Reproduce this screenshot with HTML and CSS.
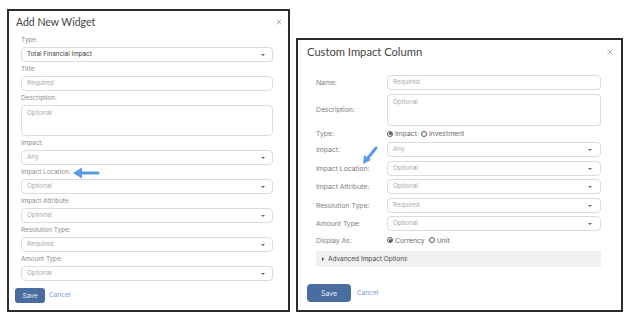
FILE: index.html
```html
<!DOCTYPE html>
<html>
<head>
<meta charset="utf-8">
<link rel="stylesheet" href="styles.css">
</head>
<body>
<div class="stage">
  <div class="panel panel-left">
    <div class="head">
      <span class="title">Add New Widget</span>
      <svg class="close" width="6" height="6" viewBox="0 0 6 6"><path d="M0.5 0.5L5.5 5.5M5.5 0.5L0.5 5.5" stroke="#9a9a9a" stroke-width="0.8"/></svg>
    </div>
    <div class="form">
      <div class="field"><div class="lbl">Type:</div><div class="ctl sel dark">Total Financial Impact<span class="caret"></span></div></div>
      <div class="field"><div class="lbl">Title:</div><div class="ctl">Required</div></div>
      <div class="field"><div class="lbl">Description:</div><div class="ctl area">Optional</div></div>
      <div class="field"><div class="lbl">Impact:</div><div class="ctl sel">Any<span class="caret"></span></div></div>
      <div class="field"><div class="lbl">Impact Location:</div><div class="ctl sel">Optional<span class="caret"></span></div></div>
      <div class="field"><div class="lbl">Impact Attribute:</div><div class="ctl sel">Optional<span class="caret"></span></div></div>
      <div class="field"><div class="lbl">Resolution Type:</div><div class="ctl sel">Required<span class="caret"></span></div></div>
      <div class="field"><div class="lbl">Amount Type:</div><div class="ctl sel">Optional<span class="caret"></span></div></div>
    </div>
    <div class="foot">
      <span class="btn btn-sm">Save</span>
      <span class="cancel">Cancel</span>
    </div>
  </div>

  <div class="panel panel-right">
    <div class="head head-r">
      <span class="title title-r">Custom Impact Column</span>
      <svg class="close" width="6" height="6" viewBox="0 0 6 6"><path d="M0.5 0.5L5.5 5.5M5.5 0.5L0.5 5.5" stroke="#9a9a9a" stroke-width="0.8"/></svg>
    </div>
    <div class="rows">
      <div class="row"><div class="rl">Name:</div><div class="ctl">Required</div></div>
      <div class="row"><div class="rl">Description:</div><div class="ctl area-r">Optional</div></div>
      <div class="row row-radio r-type"><div class="rl">Type:</div><div class="radios"><span class="radio on"></span><span class="rt">Impact</span><span class="radio"></span><span class="rt">Investment</span></div></div>
      <div class="row"><div class="rl">Impact:</div><div class="ctl sel">Any<span class="caret"></span></div></div>
      <div class="row"><div class="rl">Impact Location:</div><div class="ctl sel">Optional<span class="caret"></span></div></div>
      <div class="row"><div class="rl">Impact Attribute:</div><div class="ctl sel">Optional<span class="caret"></span></div></div>
      <div class="row"><div class="rl">Resolution Type:</div><div class="ctl sel">Required<span class="caret"></span></div></div>
      <div class="row"><div class="rl">Amount Type:</div><div class="ctl sel">Optional<span class="caret"></span></div></div>
      <div class="row row-radio r-disp"><div class="rl">Display As:</div><div class="radios"><span class="radio on"></span><span class="rt">Currency</span><span class="radio"></span><span class="rt">Unit</span></div></div>
      <div class="adv"><span class="tri"></span>Advanced Impact Options</div>
    </div>
    <div class="foot foot-r">
      <span class="btn btn-lg">Save</span>
      <span class="cancel">Cancel</span>
    </div>
  </div>

  <svg class="arrow arrow-left" width="28" height="14" viewBox="0 0 28 14">
    <line x1="8" y1="7" x2="26" y2="7" stroke="#5a9ae6" stroke-width="3" stroke-linecap="round"/>
    <polygon points="1,7 10,1.5 10,12.5" fill="#5a9ae6"/>
  </svg>
  <svg class="arrow arrow-right" width="18" height="20" viewBox="0 0 18 20">
    <line x1="15" y1="2" x2="6" y2="13" stroke="#5a9ae6" stroke-width="3" stroke-linecap="round"/>
    <polygon points="2,18 3,9 10,14" fill="#5a9ae6"/>
  </svg>
</div>
</body>
</html>
```
FILE: styles.css
```css
html, body {
  margin: 0;
  padding: 0;
  background: #fff;
}
body {
  width: 633px;
  height: 318px;
  overflow: hidden;
  font-family: Inter, "Liberation Sans", sans-serif;
}
.stage {
  position: relative;
  display: flex;
  align-items: flex-start;
  gap: 6px;
  padding: 9px 0 0 7px;
}
.panel {
  box-sizing: border-box;
  border: 2px solid #2c2c2c;
  background: #fff;
  display: flex;
  flex-direction: column;
}
.panel-left {
  width: 283px;
  height: 303px;
}
.panel-right {
  width: 327px;
  height: 274px;
  margin-top: 29px;
}
.head {
  display: flex;
  justify-content: space-between;
  align-items: center;
  height: 24px;
  box-sizing: border-box;
  padding: 2px 6px 4px 7px;
}
.title {
  font-family: Lato, "Liberation Sans", sans-serif;
  font-size: 10.5px;
  line-height: 16px;
  color: #454545;
}
.title-r {
  font-size: 11.2px;
}
.close {
  display: block;
  flex: none;
}
.form {
  flex: 1;
  overflow: hidden;
  padding: 0 15px 0 12px;
}
.field {
  margin-bottom: 2px;
}
.lbl {
  font-size: 6.3px;
  line-height: 10px;
  color: #8c8c8c;
  margin-bottom: 2px;
}
.ctl {
  position: relative;
  box-sizing: border-box;
  height: 15px;
  border: 1px solid #dcdcdc;
  border-radius: 4px;
  padding: 0 5px;
  font-size: 6.3px;
  line-height: 13px;
  color: #a8a8a8;
  background: #fff;
}
.ctl.dark {
  color: #3a3a3a;
}
.ctl.area {
  height: 31px;
  line-height: 14px;
}
.caret {
  position: absolute;
  right: 7px;
  top: 6px;
  width: 0;
  height: 0;
  border-left: 2px solid transparent;
  border-right: 2px solid transparent;
  border-top: 2.5px solid #666;
}
.foot {
  height: 28px;
  box-sizing: border-box;
  padding: 6px 0 0 6px;
  display: flex;
  align-items: flex-start;
  gap: 4px;
}
.btn {
  display: inline-flex;
  align-items: center;
  justify-content: center;
  background: #4a6d9f;
  color: #e6ecf5;
  border-radius: 3px;
  font-size: 6.5px;
}
.btn-sm {
  width: 30px;
  height: 15px;
}
.cancel {
  font-size: 6.5px;
  line-height: 15px;
  color: #6e9bd0;
}
.head-r {
  height: auto;
  padding: 4px 8px 0 9px;
}
.rows {
  margin-top: 15px;
  padding: 0 20px 0 18px;
  display: flex;
  flex-direction: column;
  gap: 3.5px;
}
.row {
  display: flex;
  align-items: center;
}
.rl {
  width: 71px;
  flex: none;
  font-size: 6.8px;
  color: #7e7e7e;
}
.row .ctl {
  flex: 1;
}
.row .caret {
  right: 8px;
}
.ctl.area-r {
  height: 32px;
  line-height: 14px;
}
.r-type {
  height: 9.5px;
}
.r-disp {
  height: 11px;
}
.radios {
  display: flex;
  align-items: center;
  font-size: 6.8px;
  color: #6a6a6a;
}
.radio {
  box-sizing: border-box;
  width: 6px;
  height: 6px;
  border: 0.8px solid #555;
  border-radius: 50%;
  margin-right: 2px;
  display: inline-flex;
  align-items: center;
  justify-content: center;
}
.radio.on::after {
  content: "";
  width: 3px;
  height: 3px;
  border-radius: 50%;
  background: #555;
}
.rt {
  margin-right: 4px;
}
.adv {
  margin-top: 2px;
  height: 16px;
  background: #f1f1f1;
  display: flex;
  align-items: center;
  padding-left: 6px;
  font-size: 6.5px;
  color: #4a4a4a;
}
.tri {
  width: 0;
  height: 0;
  border-top: 2px solid transparent;
  border-bottom: 2px solid transparent;
  border-left: 2.5px solid #444;
  margin-right: 4px;
}
.foot-r {
  margin-top: auto;
  height: auto;
  padding: 0 0 8px 9px;
  gap: 6px;
  align-items: center;
}
.btn-lg {
  width: 44px;
  height: 18px;
  border-radius: 4px;
  font-size: 7px;
}
.arrow {
  position: absolute;
}
.arrow-left {
  left: 72px;
  top: 166px;
}
.arrow-right {
  left: 361px;
  top: 146px;
}
```
